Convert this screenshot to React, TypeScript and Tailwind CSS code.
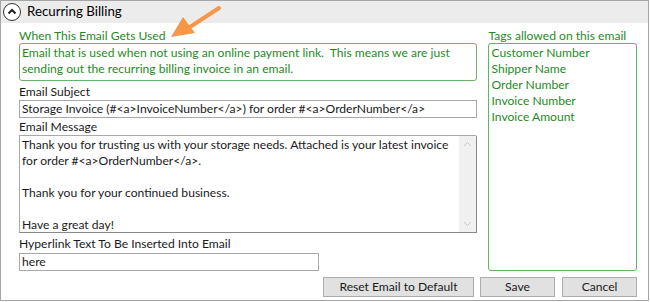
import React from "react";

const font = "font-['Lato','Noto_Sans',sans-serif]";

const tags = [
  "Customer Number",
  "Shipper Name",
  "Order Number",
  "Invoice Number",
  "Invoice Amount",
];

const CollapseIcon = () => (
  <svg width="20" height="20" viewBox="0 0 20 20" className="shrink-0">
    <circle cx="10" cy="10" r="8.5" fill="white" stroke="#333" strokeWidth="1" />
    <path d="M6.5 11.5 L10 8 L13.5 11.5" fill="none" stroke="#222" strokeWidth="2" />
  </svg>
);

const Arrow = () => (
  <svg
    className="absolute left-[165px] top-[2px] pointer-events-none"
    width="60"
    height="40"
    viewBox="0 0 60 40"
  >
    <line x1="53" y1="5" x2="24" y2="24" stroke="#f79646" strokeWidth="4" strokeLinecap="round" />
    <polygon points="5,34 17,14 29,30" fill="#f79646" />
  </svg>
);

export default function App() {
  return (
    <div className={`${font} relative w-[649px] h-[301px] border border-[#a6a6a6] bg-white text-[12.1px] text-[#1a1a1a]`}>
      {/* Header */}
      <div className="flex items-center gap-[5px] h-[22px] bg-[#ececec] pl-[1px]">
        <CollapseIcon />
        <span className="text-[13.3px] text-black">Recurring Billing</span>
      </div>

      <Arrow />

      <div className="pl-[18px] pr-[11px] pt-[5px]">
        <div className="flex gap-[11px]">
          {/* Main column */}
          <div className="w-[460px] flex flex-col">
            <div className="leading-[15px] text-[#1f8a1f]">When This Email Gets Used</div>
            <div className="h-[38px] border border-[#6ab36a] rounded-[3px] px-[2px] pt-[1px] leading-[16px] text-[#1f8a1f]">
              Email that is used when not using an online payment link.&nbsp; This means we are just sending out the recurring billing invoice in an email.
            </div>

            <div className="mt-[3px] leading-[16px]">Email Subject</div>
            <div className="h-[18px] border border-[#a9a9a9] px-[2px] leading-[16px] whitespace-nowrap overflow-hidden">
              Storage Invoice (#&lt;a&gt;InvoiceNumber&lt;/a&gt;) for order #&lt;a&gt;OrderNumber&lt;/a&gt;
            </div>

            <div className="mt-[1px] leading-[16px]">Email Message</div>
            <div className="h-[98px] flex border border-[#a9a9a9] border-r-[#8a8a8a] border-b-[#8a8a8a] rounded-tr-[2px]">
              <div className="flex-1 px-[2px] pt-[1px] leading-[16px]">
                <p>Thank you for trusting us with your storage needs. Attached is your latest invoice for order #&lt;a&gt;OrderNumber&lt;/a&gt;.</p>
                <p className="mt-[16px]">Thank you for your continued business.</p>
                <p className="mt-[16px]">Have a great day!</p>
              </div>
              <div className="w-[17px] bg-[#f0f0f0] flex flex-col justify-between items-center py-[5px]">
                <svg width="9" height="6" viewBox="0 0 9 6">
                  <path d="M1 5 L4.5 1.5 L8 5" fill="none" stroke="#c8c8c8" strokeWidth="1" />
                </svg>
                <svg width="9" height="6" viewBox="0 0 9 6">
                  <path d="M1 1 L4.5 4.5 L8 1" fill="none" stroke="#c8c8c8" strokeWidth="1" />
                </svg>
              </div>
            </div>

            <div className="mt-[3px] leading-[16px]">Hyperlink Text To Be Inserted Into Email</div>
            <div className="mt-[1px] w-[300px] h-[18px] border border-[#a9a9a9] px-[2px] leading-[16px]">
              here
            </div>
          </div>

          {/* Tags column */}
          <div className="w-[149px] flex flex-col">
            <div className="leading-[15px] text-[#1f8a1f]">Tags allowed on this email</div>
            <div className="flex-1 border border-[#5cb85c] rounded-[3px] px-[2px] pt-[1px] leading-[16px] text-[#1f8a1f]">
              {tags.map((t) => (
                <div key={t}>{t}</div>
              ))}
            </div>
          </div>
        </div>

        {/* Buttons */}
        <div className="flex justify-end gap-[6px] mt-[6px]">
          <button className="w-[151px] h-[20px] bg-[#e1e1e1] border border-[#adadad] leading-[16px]">
            Reset Email to Default
          </button>
          <button className="w-[75px] h-[20px] bg-[#e1e1e1] border border-[#adadad] leading-[16px]">
            Save
          </button>
          <button className="w-[75px] h-[20px] bg-[#e1e1e1] border border-[#adadad] leading-[16px] ml-[1px]">
            Cancel
          </button>
        </div>
      </div>
    </div>
  );
}
